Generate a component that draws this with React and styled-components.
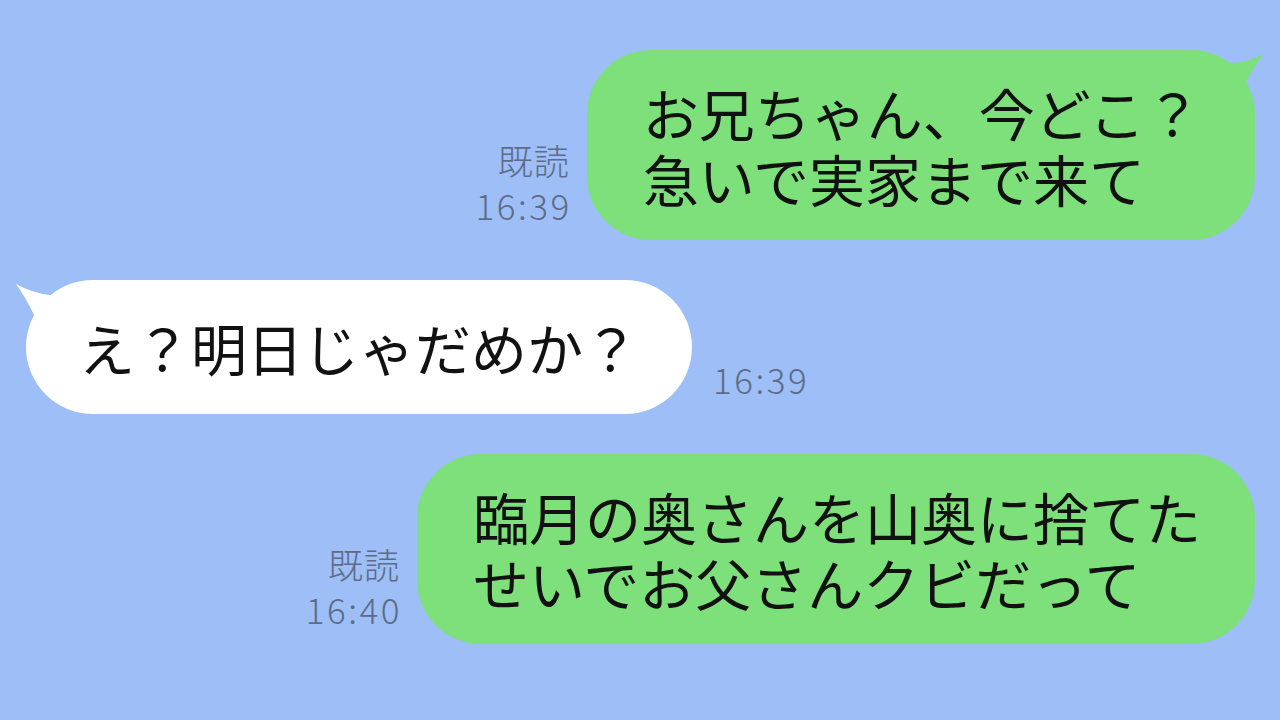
import styled, { createGlobalStyle } from "styled-components";

const GlobalStyle = createGlobalStyle`
  html, body {
    margin: 0;
    padding: 0;
    background: #9dbef7;
  }
  body {
    font-family: "Noto Sans CJK JP", "Noto Sans", sans-serif;
  }
`;

const Screen = styled.div`
  width: 1280px;
  height: 720px;
  box-sizing: border-box;
  padding: 50px 25px 0 26px;
  background: #9dbef7;
  display: flex;
  flex-direction: column;
  gap: 40px;
  overflow: hidden;
`;

const Row = styled.div`
  display: flex;
  align-items: flex-end;
  justify-content: ${(p) => (p.$mine ? "flex-end" : "flex-start")};
  gap: ${(p) => (p.$mine ? "17px" : "21px")};
`;

const Bubble = styled.div`
  position: relative;
  background: ${(p) => (p.$mine ? "#7de07b" : "#ffffff")};
  color: #111;
  border-radius: ${(p) => (p.$pill ? "67px" : "64px")};
  padding: ${(p) => (p.$pill ? "34px 53px" : "29px 54px 29px 56px")};
  font-size: 56px;
  line-height: 66px;
  white-space: nowrap;
`;

const Tail = styled.svg`
  position: absolute;
  top: 0;
  width: 50px;
  height: 50px;
  ${(p) => (p.$mine ? "right: -12px;" : "left: -12px;")}
`;

const Meta = styled.div`
  display: flex;
  flex-direction: column;
  align-items: ${(p) => (p.$mine ? "flex-end" : "flex-start")};
  padding-bottom: 13px;
  color: #5d6c86;
  font-size: 35px;
  font-weight: 300;
  line-height: 45px;
`;

const Read = styled.span`
  letter-spacing: 1px;
`;

const Time = styled.span`
  letter-spacing: 2.5px;
  margin-right: -2px;
`;

function Message({ mine, read, time, pill, tail, children }) {
  return (
    <Row $mine={mine}>
      {mine && (
        <Meta $mine>
          {read && <Read>既読</Read>}
          <Time>{time}</Time>
        </Meta>
      )}
      <Bubble $mine={mine} $pill={pill}>
        {tail && mine && (
          <Tail $mine viewBox="0 0 50 50">
            <path d="M13 13 Q30 13 46 4 Q36 18 29 32 L0 50 L0 13 Z" fill="#7de07b" />
          </Tail>
        )}
        {tail && !mine && (
          <Tail viewBox="0 0 50 50">
            <path d="M36 15 Q18 13 2 4 Q12 18 20 35 L50 50 L50 15 Z" fill="#ffffff" />
          </Tail>
        )}
        {children}
      </Bubble>
      {!mine && (
        <Meta>
          <Time>{time}</Time>
        </Meta>
      )}
    </Row>
  );
}

export default function App() {
  return (
    <>
      <GlobalStyle />
      <Screen>
        <Message mine read time="16:39" tail>
          お兄ちゃん、今どこ？
          <br />
          急いで実家まで来て
        </Message>
        <Message time="16:39" pill tail>
          え？明日じゃだめか？
        </Message>
        <Message mine read time="16:40">
          臨月の奥さんを山奥に捨てた
          <br />
          せいでお父さんクビだって
        </Message>
      </Screen>
    </>
  );
}
